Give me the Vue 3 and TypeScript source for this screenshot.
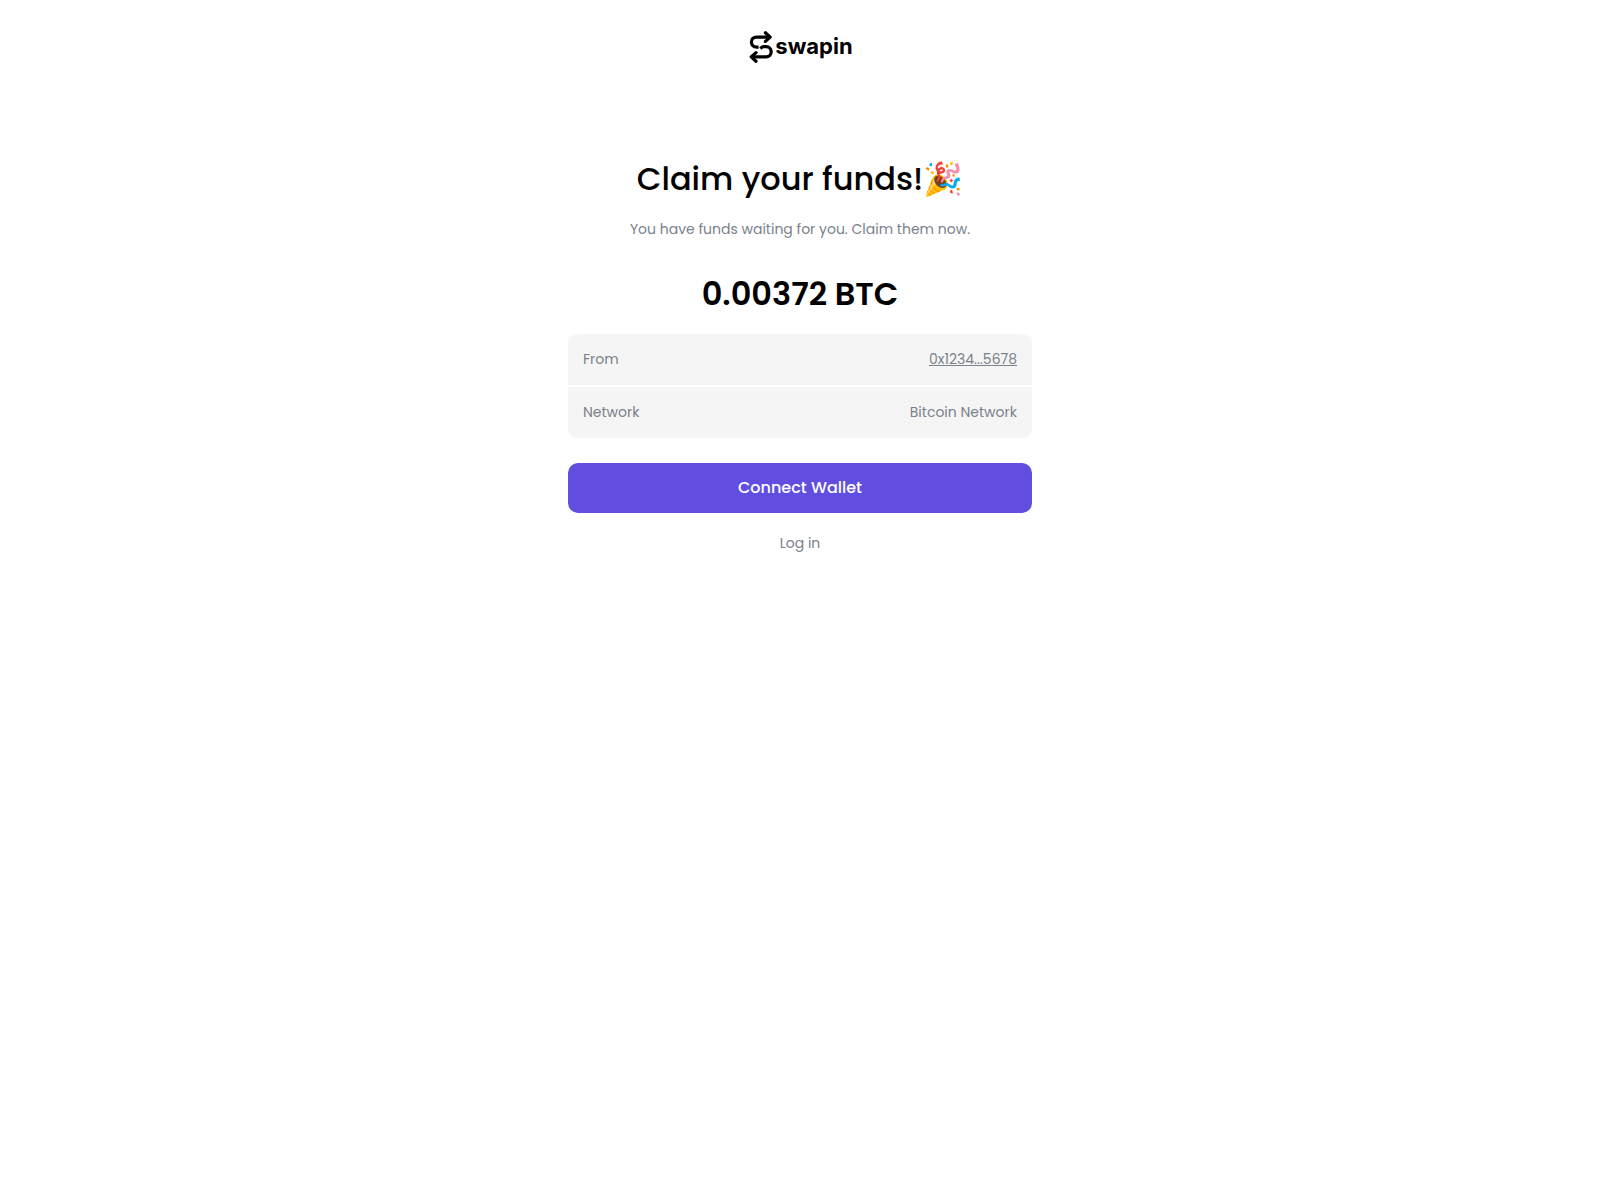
<script setup lang="ts">
interface Detail {
  label: string
  value: string
  href?: string
}

const amount = '0.00372 BTC'
const details: Detail[] = [
  { label: 'From', value: '0x1234...5678', href: '#sender' },
  { label: 'Network', value: 'Bitcoin Network' },
]
</script>

<template>
  <div class="page">
    <header class="header">
      <a class="logo" href="#home" aria-label="swapin">
        <svg class="mark" viewBox="0 0 24 32" aria-hidden="true">
          <g fill="none" stroke="#000" stroke-width="3.2" stroke-linecap="round" stroke-linejoin="round">
            <path d="M16.4 1.8 21.2 6.1 16.4 10.4" />
            <path d="M20.8 6.1H7.6C4.4 6.1 2.4 8.2 2.4 11.1s2 5 5.2 5H9.6" stroke-linecap="butt" />
            <path d="M7 21.6 2.2 25.9 7 30.2" />
            <path d="M2.8 25.9h14.2c3.2 0 5.2-2.2 5.2-5.2s-2-5-5.2-5H14.8Q13.2 15.7 11.4 17.6" stroke-linecap="butt" />
          </g>
        </svg>
        <span class="wordmark">swapin</span>
      </a>
    </header>

    <main class="claim">
      <h1 class="title">Claim your funds!<span class="emoji">🎉</span></h1>
      <p class="subtitle">You have funds waiting for you. Claim them now.</p>
      <p class="amount">{{ amount }}</p>

      <dl class="details">
        <div v-for="item in details" :key="item.label" class="row">
          <dt>{{ item.label }}</dt>
          <dd>
            <a v-if="item.href" class="address" :href="item.href">{{ item.value }}</a>
            <template v-else>{{ item.value }}</template>
          </dd>
        </div>
      </dl>

      <button class="connect" type="button">Connect Wallet</button>
      <a class="login" href="#login">Log in</a>
    </main>
  </div>
</template>

<style>
body {
  background: #fff;
}
</style>

<style scoped>
.page {
  font-family: Poppins, Inter, "Noto Sans", sans-serif;
  font-size: 14px;
  line-height: 20px;
  color: #7a818c;
}

.header {
  display: flex;
  justify-content: center;
  padding: 31px 16px 0;
}

.logo {
  display: flex;
  align-items: center;
  gap: 2px;
  padding-left: 2px;
  color: #000;
  text-decoration: none;
}

.mark {
  width: 24px;
  height: 32px;
}

.wordmark {
  font-family: Inter, sans-serif;
  font-size: 22px;
  font-weight: 700;
  line-height: 28px;
  padding-bottom: 2px;
}

.claim {
  display: flex;
  flex-direction: column;
  align-items: center;
  box-sizing: border-box;
  width: 100%;
  max-width: 496px;
  margin: 0 auto;
  padding: 92px 16px 0;
  text-align: center;
}

.title {
  margin: 0;
  font-size: 32px;
  font-weight: 500;
  line-height: 48px;
  color: #000;
}

.subtitle {
  margin: 16px 0 0;
  white-space: nowrap;
}

.amount {
  margin: 31px 0 0;
  font-size: 32px;
  font-weight: 600;
  line-height: 48px;
  color: #000;
}

.details {
  display: flex;
  flex-direction: column;
  gap: 2px;
  width: 100%;
  margin: 16px 0 0;
  border-radius: 10px;
  overflow: hidden;
}

.row {
  display: flex;
  justify-content: space-between;
  padding: 15px 15px 16px;
  background: #f5f5f5;
}

.row dd {
  margin: 0;
}

.address {
  color: inherit;
}

.connect {
  width: 100%;
  height: 50px;
  margin: 25px 0 0;
  padding: 0 16px 2px;
  border: 0;
  border-radius: 10px;
  background: #614ee1;
  color: #fff;
  font-family: inherit;
  font-size: 16px;
  font-weight: 500;
  cursor: pointer;
}

.login {
  margin-top: 20px;
  color: inherit;
  text-decoration: none;
}
</style>
